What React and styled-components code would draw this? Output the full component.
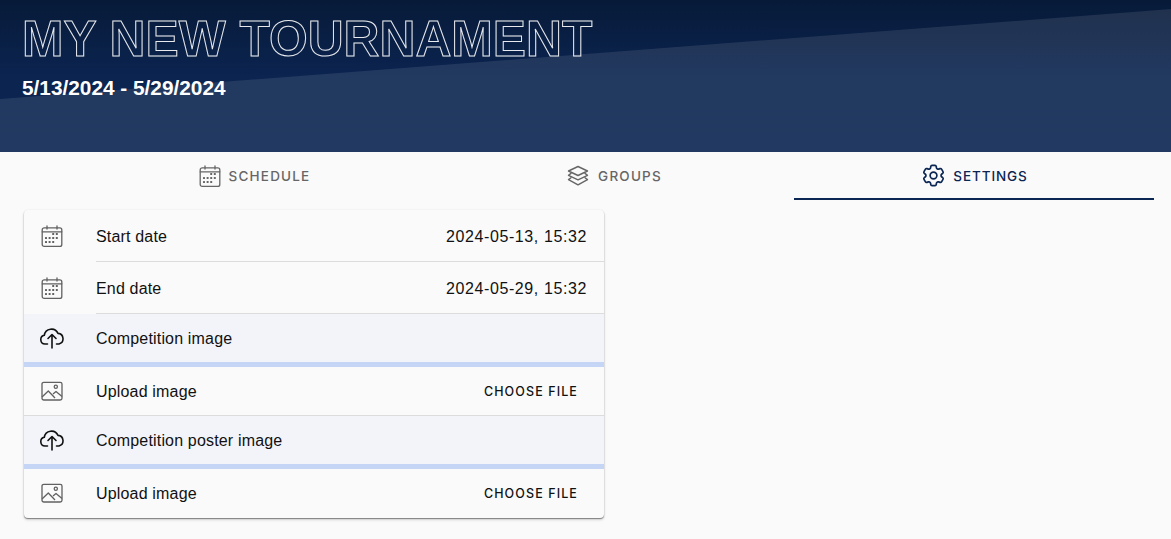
import React from 'react'
import styled, { createGlobalStyle } from 'styled-components'
import { HiOutlineCog6Tooth } from 'react-icons/hi2'

const GlobalStyle = createGlobalStyle`
  body {
    margin: 0;
    min-height: 100vh;
    background: #fafafa;
    font-family: "Liberation Sans", Arial, sans-serif;
  }
`

const Banner = styled.header`
  position: relative;
  height: 152px;
  padding: 15px 22px 0;
  box-sizing: border-box;
  overflow: hidden;
  background: linear-gradient(180deg, #071a38 0%, #0b2450 50%, #0b2551 100%);

  &::after {
    content: '';
    position: absolute;
    inset: 0;
    background: rgba(250, 250, 250, 0.1);
    clip-path: polygon(0 99px, 100% 9px, 100% 100%, 0 100%);
  }
`

const Title = styled.h1`
  margin: 0;
  font-size: 49.75px;
  line-height: 48px;
  font-weight: 700;
  color: transparent;
  -webkit-text-stroke: 1px rgba(255, 255, 255, 0.9);
`

const Dates = styled.div`
  margin-top: 13px;
  position: relative;
  z-index: 1;
  font-size: 20.8px;
  line-height: 24px;
  font-weight: 700;
  color: #fff;
`

const TabBar = styled.nav`
  display: grid;
  grid-template-columns: repeat(3, 360px);
  padding-left: 74px;
`

const Tab = styled.div`
  height: 48px;
  padding-top: 1px;
  box-sizing: border-box;
  display: flex;
  align-items: center;
  justify-content: center;
  gap: ${p => p.$gap}px;
  font-family: Inter, sans-serif;
  font-size: 13.5px;
  font-weight: 500;
  letter-spacing: ${p => (p.$active ? 0.9 : 1.2)}px;
  color: ${p => (p.$active ? '#0b2653' : '#666')};
  border-bottom: 2px solid ${p => (p.$active ? '#0b2653' : 'transparent')};
`

const Card = styled.section`
  width: 580px;
  margin: 10px 0 0 24px;
  border-radius: 4px;
  background: #fafafa;
  box-shadow: 0 1px 1px rgba(0, 0, 0, 0.4), 0 2px 3px rgba(0, 0, 0, 0.15), 0 0 2px rgba(0, 0, 0, 0.08);
  overflow: hidden;
`

const Row = styled.div`
  display: flex;
  align-items: center;
  height: ${p => p.$height}px;
  padding-right: ${p => (p.$button ? 26 : 17)}px;
  padding-bottom: ${p => (p.$button ? 1 : 0)}px;
  background: ${p => (p.$section ? '#f3f4f9' : 'transparent')};
  border-bottom: ${p => (p.$section ? '5px solid #c5d5f5' : 'none')};
`

const IconCell = styled.div`
  width: 72px;
  padding-left: 16px;
  box-sizing: border-box;
  flex: none;
  display: flex;
  align-items: center;
  color: ${p => (p.$dark ? '#111' : '#616161')};
`

const RowBody = styled.div`
  flex: 1;
  padding-top: 2px;
  font-size: 16px;
  letter-spacing: 0.17px;
  color: #111;
`

const RowValue = styled.div`
  padding-top: 2px;
  font-size: 16px;
  letter-spacing: 0.6px;
  color: #111;
`

const ChooseFile = styled.span`
  font-family: Inter, sans-serif;
  font-size: 12.5px;
  font-weight: 500;
  letter-spacing: 1.1px;
  color: #111;
`

const Divider = styled.div`
  height: 1px;
  margin-left: ${p => (p.$inset ? 72 : 0)}px;
  margin-top: -1px;
  position: relative;
  background: #dcdcdc;
`

const calendarDots = [
  [13.2, 10], [16.8, 10],
  [6, 14], [9.6, 14], [13.2, 14], [16.8, 14],
  [6, 18], [9.6, 18], [13.2, 18],
]

const CalendarIcon = () => (
  <svg width="24" height="24" viewBox="0 0 24 24" fill="none" stroke="currentColor" strokeWidth="1.3" strokeLinecap="round">
    <rect x="2.2" y="3.8" width="19.6" height="18.6" rx="2" />
    <path d="M2.2 7.8h19.6M7 2v3M17 2v3" />
    {calendarDots.map(([x, y]) => (
      <rect key={`${x}-${y}`} x={x - 1} y={y - 1} width="2" height="2" rx="0.5" fill="currentColor" stroke="none" />
    ))}
  </svg>
)

const StackIcon = () => (
  <svg width="24" height="24" viewBox="0 0 24 24" fill="none" stroke="currentColor" strokeWidth="1.4" strokeLinejoin="round" strokeLinecap="round">
    <path d="M12 2.5 21.5 7 12 11.5 2.5 7z" />
    <path d="M5 9.4 2.5 11.3 12 15.8 21.5 11.3 19 9.4" />
    <path d="M5 13.7 2.5 15.6 12 20.8 21.5 15.6 19 13.7" />
  </svg>
)

const CloudIcon = () => (
  <svg width="24" height="24" viewBox="0 0 24 24" fill="none" stroke="currentColor" strokeWidth="1.6" strokeLinecap="round" strokeLinejoin="round">
    <path d="M7.5 18H5a4.4 4.4 0 0 1-.7-8.7A7.2 7.2 0 0 1 18 7.4 5.4 5.4 0 0 1 19 18h-2.5" />
    <path d="M12 22V8.5M8 12.5l4-4 4 4" />
  </svg>
)

const PhotoIcon = () => (
  <svg width="24" height="24" viewBox="0 0 24 24" fill="none" stroke="currentColor" strokeWidth="1.3" strokeLinejoin="round">
    <rect x="2" y="3.3" width="20" height="17.7" rx="1.8" />
    <path d="M2 18 8.3 12 15 19M13 15l3-2.5 6 5" />
    <circle cx="15.8" cy="7.8" r="1.6" />
  </svg>
)

const App = () => (
  <>
    <GlobalStyle />
    <Banner>
      <Title>MY NEW TOURNAMENT</Title>
      <Dates>5/13/2024 - 5/29/2024</Dates>
    </Banner>
    <TabBar>
      <Tab $gap={7}><CalendarIcon />SCHEDULE</Tab>
      <Tab $gap={8}><StackIcon />GROUPS</Tab>
      <Tab $active $gap={6}><HiOutlineCog6Tooth size={27} />SETTINGS</Tab>
    </TabBar>
    <Card>
      <Row $height={52}>
        <IconCell><CalendarIcon /></IconCell>
        <RowBody>Start date</RowBody>
        <RowValue>2024-05-13, 15:32</RowValue>
      </Row>
      <Divider $inset />
      <Row $height={52}>
        <IconCell><CalendarIcon /></IconCell>
        <RowBody>End date</RowBody>
        <RowValue>2024-05-29, 15:32</RowValue>
      </Row>
      <Divider $inset />
      <Row $section $height={48}>
        <IconCell $dark><CloudIcon /></IconCell>
        <RowBody>Competition image</RowBody>
      </Row>
      <Row $button $height={48}>
        <IconCell><PhotoIcon /></IconCell>
        <RowBody>Upload image</RowBody>
        <ChooseFile>CHOOSE FILE</ChooseFile>
      </Row>
      <Divider />
      <Row $section $height={48}>
        <IconCell $dark><CloudIcon /></IconCell>
        <RowBody>Competition poster image</RowBody>
      </Row>
      <Row $button $height={48}>
        <IconCell><PhotoIcon /></IconCell>
        <RowBody>Upload image</RowBody>
        <ChooseFile>CHOOSE FILE</ChooseFile>
      </Row>
    </Card>
  </>
)

export default App
